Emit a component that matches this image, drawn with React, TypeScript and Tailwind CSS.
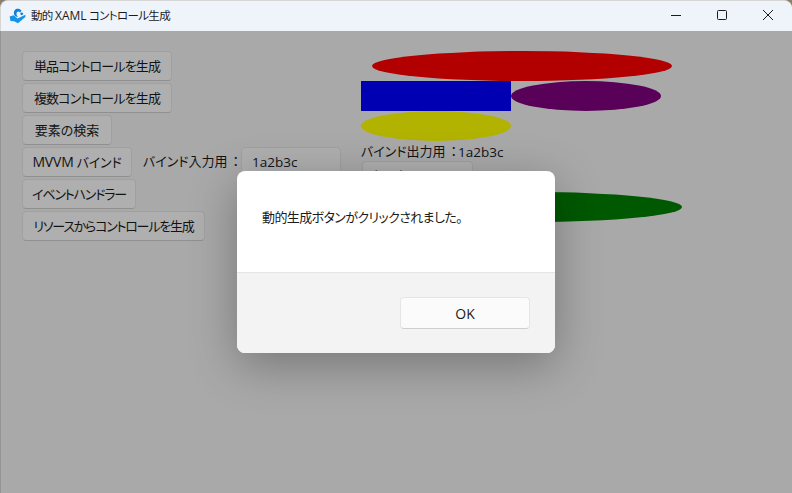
const jp = "font-['Open_Sans','Noto_Sans_CJK_JP',sans-serif] [font-feature-settings:'palt'] text-[13px]"

const buttons = [
  { label: "単品コントロールを生成", width: "w-[150px]", tracking: "tracking-[-0.85px]" },
  { label: "複数コントロールを生成", width: "w-[150px]", tracking: "tracking-[-0.85px]" },
  { label: "要素の検索", width: "w-[90px]", tracking: "" },
]

function WinButton({ className, children }: { className: string; children: React.ReactNode }) {
  return (
    <button className={`h-[30px] flex items-center justify-center whitespace-nowrap rounded-[4px] border border-[#e5e5e5] border-b-[#cfcfcf] bg-[#fbfbfb] text-[#1b1b1b] leading-none ${className}`}>
      {children}
    </button>
  )
}

function Ellipse({ className }: { className: string }) {
  return <div className={`h-[30px] w-[150px] rounded-[50%] ${className}`} />
}

function AppIcon() {
  return (
    <svg width="17" height="16" viewBox="0 0 16 15" fill="none">
      <path d="M11.8 2.6 C10.2 0.4 6.8 0.2 5.4 2 C4 3.8 4.4 6.4 6 7.8 L8.6 8.6 C7.2 7.2 6.6 5.2 7.4 3.9 C8.2 2.9 9.6 3.1 10.4 4.2 Z" fill="#0f7fd8" />
      <path d="M0.6 8 L4.4 6.8 L8 9.8 L15.4 6.4 L15.4 8.4 L8.4 14.4 L4.8 12.4 L1.4 12.2 Z" fill="#1593e6" />
      <circle cx="12" cy="5.4" r="1.3" fill="#0f7fd8" />
    </svg>
  )
}

export default function App() {
  return (
    <div className={`relative h-[493px] w-[792px] overflow-hidden bg-[#8a7f6c] ${jp}`}>
      <div className="flex h-full flex-col overflow-hidden rounded-t-[8px] border-l border-t border-[#d6d6d6] bg-[#f3f3f3]">
        {/* Title bar */}
        <div className="flex h-[30px] shrink-0 items-center bg-[#eff4fb] text-[#1b1b1b]">
          <div className="ml-[8px] flex w-[22px] shrink-0">
            <AppIcon />
          </div>
          <span className="text-[11.5px] tracking-[-0.65px]">動的 <span className="text-[12px] tracking-normal">XAML</span> コントロール生成</span>
          <div className="mb-[2px] ml-auto flex items-center pr-[1px]">
            <div className="flex w-[46px] justify-center">
              <svg width="12" height="12" viewBox="0 0 12 12"><path d="M1 6.5h10" stroke="#1b1b1b" /></svg>
            </div>
            <div className="flex w-[46px] justify-center">
              <svg width="12" height="12" viewBox="0 0 12 12" fill="none"><rect x="1.5" y="1.5" width="9" height="9" rx="1" stroke="#1b1b1b" /></svg>
            </div>
            <div className="flex w-[46px] justify-center">
              <svg width="12" height="12" viewBox="0 0 12 12"><path d="M1 1l10 10M11 1L1 11" stroke="#1b1b1b" /></svg>
            </div>
          </div>
        </div>

        {/* Window content */}
        <div className="flex flex-1 pl-[21px] pt-[20px]">
          <div className="flex w-[339px] shrink-0 flex-col gap-[2px]">
            {buttons.map((b) => (
              <WinButton key={b.label} className={`${b.width} ${b.tracking}`}>{b.label}</WinButton>
            ))}
            <div className="flex items-center">
              <WinButton className="w-[110px] tracking-[-0.2px]"><span className="text-[14px]">MVVM</span>&nbsp;バインド</WinButton>
              <span className="ml-[11px] w-[98px] whitespace-nowrap text-[#1b1b1b]">バインド入力用<span className="ml-[5px]">：</span></span>
              <div className="flex h-[30px] w-[100px] items-center rounded-[4px] border border-[#e5e5e5] bg-[#fbfbfb] pl-[10px] text-[13.5px] text-[#1b1b1b]">1a2b3c</div>
            </div>
            <WinButton className="w-[114px] tracking-[-1.2px]">イベントハンドラー</WinButton>
            <WinButton className="w-[183px] tracking-[-1.25px]">リソースからコントロールを生成</WinButton>
          </div>

          <div className="flex flex-col">
            <Ellipse className="ml-[11px] w-[300px] bg-[#ff0000]" />
            <div className="flex">
              <div className="h-[30px] w-[150px] bg-[#0000ff]" />
              <Ellipse className="bg-[#800080]" />
            </div>
            <Ellipse className="bg-[#ffff00]" />
            <div className="mt-[2px] flex h-[18px] items-center whitespace-nowrap text-[#1b1b1b]">
              バインド出力用<span className="ml-[5px]">：</span><span className="ml-[1px] text-[13.5px]">1a2b3c</span>
            </div>
            <WinButton className="ml-[1px] w-[111px]">プロパティバインド</WinButton>
            <Ellipse className="ml-[21px] mt-[1px] w-[300px] bg-[#008000]" />
          </div>
        </div>
      </div>

      {/* Modal overlay */}
      <div className="absolute inset-x-0 bottom-0 top-[31px] bg-black/30" />
      <div className="absolute left-[237px] top-[171px] flex h-[182px] w-[318px] flex-col overflow-hidden rounded-[8px] bg-white shadow-[0_12px_48px_rgba(0,0,0,0.3)]">
        <div className="h-[102px] border-b border-[#e5e5e5] pl-[25px] pt-[37px] leading-[18px] tracking-[-0.6px] text-[#1b1b1b]">
          動的生成ボタンがクリックされました。
        </div>
        <div className="flex flex-1 justify-end bg-[#f3f3f3] pr-[25px] pt-[24px]">
          <button className="h-[32px] w-[130px] rounded-[4px] border border-[#e5e5e5] border-b-[#cfcfcf] bg-[#fbfbfb] text-[14px] text-[#1b1b1b]">OK</button>
        </div>
      </div>
    </div>
  )
}
